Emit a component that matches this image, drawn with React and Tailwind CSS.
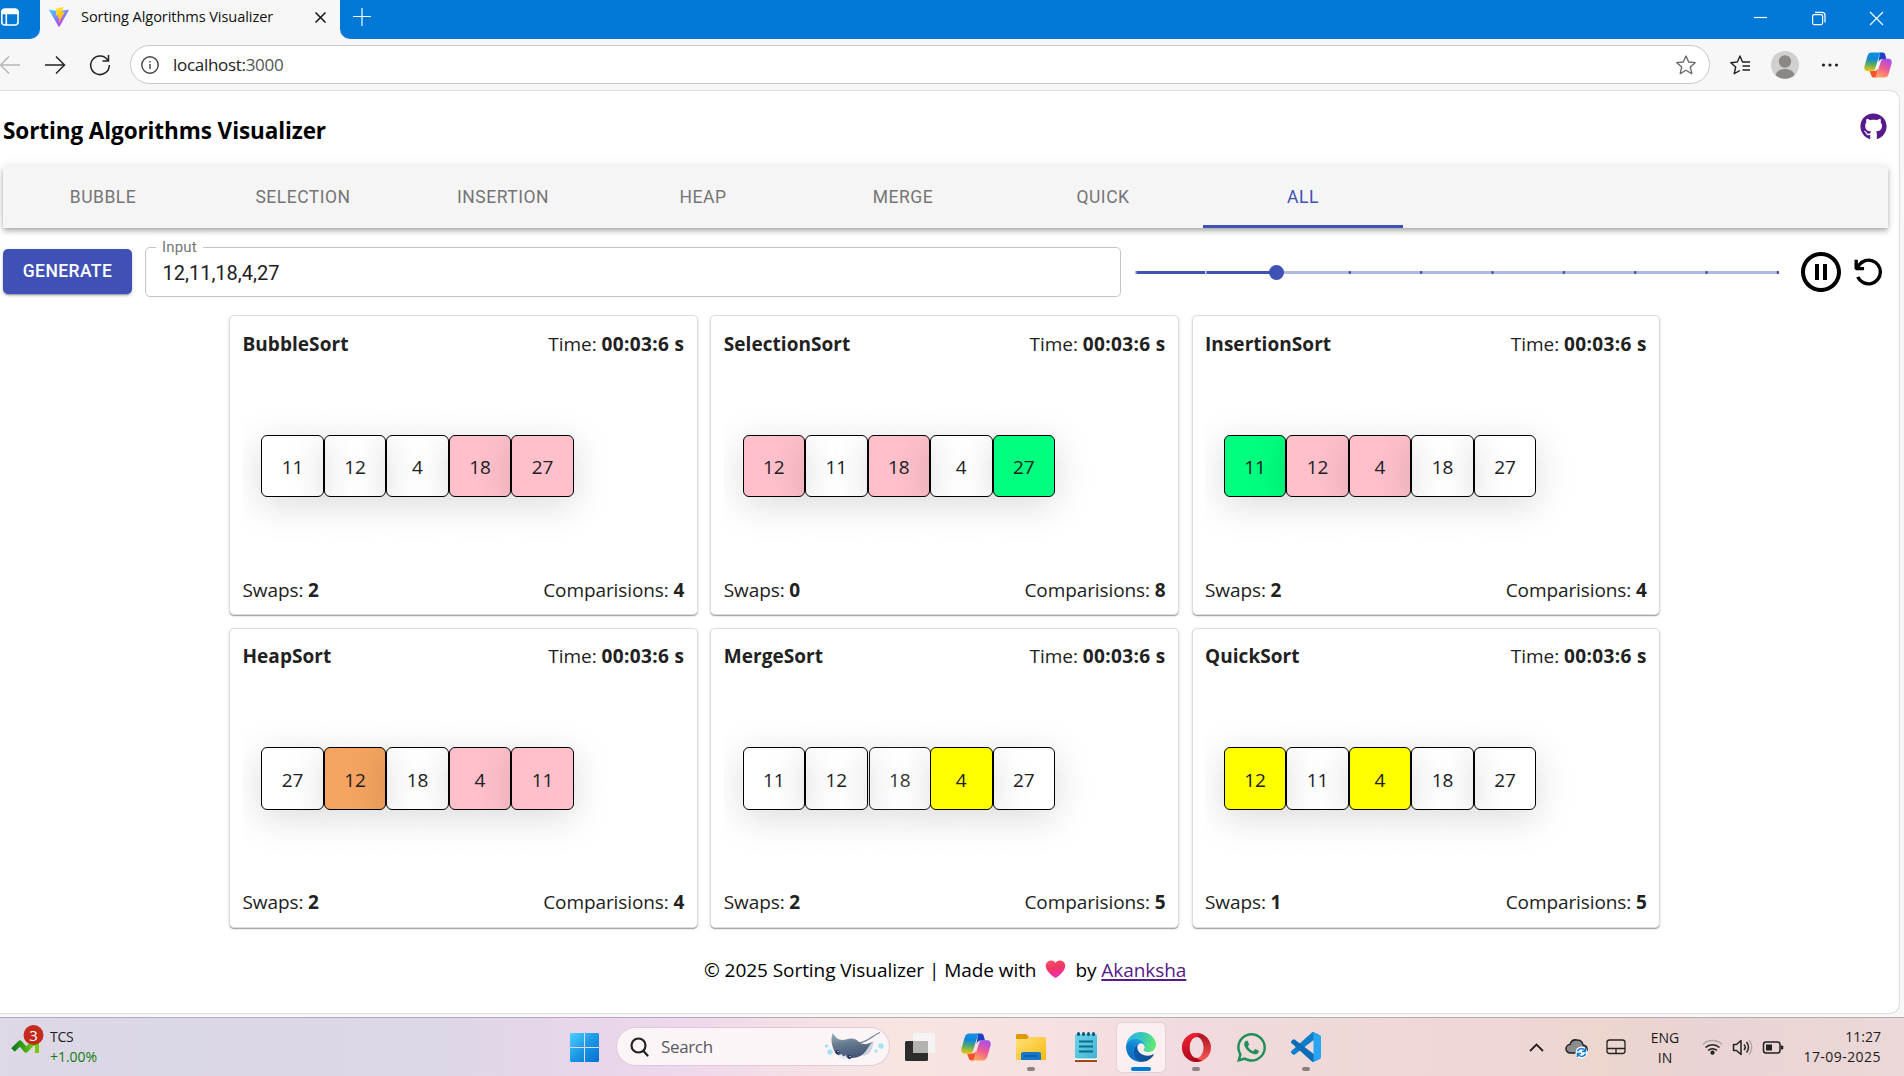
import { VscDebugRestart } from "react-icons/vsc";
import { MdPauseCircleOutline } from "react-icons/md";
import { FaGithub, FaWhatsapp } from "react-icons/fa";

const SEGOE = "font-['Open_Sans',sans-serif]";

const COLORS = {
  w: "",
  p: "bg-[#ffc0cb]",
  g: "bg-[#00ff7f]",
  o: "bg-[#f4a460]",
  y: "bg-[#ffff00] relative z-10",
  m: "translate-x-px opacity-90",
};

const SORTS = [
  { name: "BubbleSort", swaps: 2, comps: 4, items: [[11, "w"], [12, "w"], [4, "w"], [18, "p"], [27, "p"]] },
  { name: "SelectionSort", swaps: 0, comps: 8, items: [[12, "p"], [11, "w"], [18, "p"], [4, "w"], [27, "g"]] },
  { name: "InsertionSort", swaps: 2, comps: 4, items: [[11, "g"], [12, "p"], [4, "p"], [18, "w"], [27, "w"]] },
  { name: "HeapSort", swaps: 2, comps: 4, items: [[27, "w"], [12, "o"], [18, "w"], [4, "p"], [11, "p"]] },
  { name: "MergeSort", swaps: 2, comps: 5, items: [[11, "w"], [12, "w"], [18, "m"], [4, "y"], [27, "w"]] },
  { name: "QuickSort", swaps: 1, comps: 5, items: [[12, "y"], [11, "w"], [4, "y"], [18, "w"], [27, "w"]] },
];

const TABS = ["BUBBLE", "SELECTION", "INSERTION", "HEAP", "MERGE", "QUICK", "ALL"];

function ViteLogo() {
  return (
    <svg width="20" height="20" viewBox="0 0 32 32">
      <defs>
        <linearGradient id="va" x1="0" y1="0" x2="0.6" y2="1">
          <stop offset="0" stopColor="#41d1ff" />
          <stop offset="1" stopColor="#bd34fe" />
        </linearGradient>
        <linearGradient id="vb" x1="0.4" y1="0" x2="0.6" y2="1">
          <stop offset="0" stopColor="#ffea83" />
          <stop offset="0.1" stopColor="#ffdd35" />
          <stop offset="1" stopColor="#ffa800" />
        </linearGradient>
      </defs>
      <path fill="url(#va)" d="M31.4 5.5 16.9 31.1a.9.9 0 0 1-1.6 0L.5 5.5a.9.9 0 0 1 1-1.3L16 6.8l14.4-2.6a.9.9 0 0 1 1 1.3Z" />
      <path fill="url(#vb)" d="M22.6 0 11.9 2.1a.5.5 0 0 0-.4.4l-.6 11.1c0 .3.2.5.5.4l3-.7c.3 0 .5.2.5.5l-.9 4.3c0 .3.2.6.5.5l1.8-.5c.3-.1.6.1.5.4l-1.4 6.8c-.1.5.5.7.7.3l8.8-17.5c.1-.3-.1-.6-.4-.6l-3.1.6c-.3.1-.5-.2-.5-.5l2-7c.2-.3 0-.6-.3-.6Z" />
    </svg>
  );
}

function Copilot({ size }) {
  return (
    <svg width={size} height={size} viewBox="0 0 30 30">
      <defs>
        <linearGradient id="ca" x1="0.3" y1="0" x2="0.2" y2="1">
          <stop offset="0" stopColor="#1490df" />
          <stop offset="0.3" stopColor="#0f86dc" />
          <stop offset="0.6" stopColor="#52a86b" />
          <stop offset="1" stopColor="#f2cb0b" />
        </linearGradient>
        <linearGradient id="cb" x1="0.7" y1="0" x2="0.3" y2="1">
          <stop offset="0" stopColor="#a64ef0" />
          <stop offset="0.5" stopColor="#ee5a8f" />
          <stop offset="1" stopColor="#ffa85c" />
        </linearGradient>
      </defs>
      <path fill="#1b41c4" d="M17 1.5h3c1.5 0 2.3.9 2.7 2.3L24 8.5h-3.5c-3 0-4 1-5 4Z" />
      <path fill="#f4532f" d="M13 28.5h-2.5c-1.5 0-2.3-1-2.7-2.3L6 21.5h4.5c3 0 4-1 5-4Z" />
      <path fill="url(#ca)" d="M8 1.5h11c-1.6.5-2.3 2-2.900 4l-4 13c-.6 2-1.8 3.2-4 3.2H3.5C.8 21.7-.3 19 .6 16L3.8 5C4.500 2.8 5.800 1.500 8 1.500Z" />
      <path fill="url(#cb)" d="M22 28.5H11c1.600-.5 2.300-2 2.900-4l4-13c.6-2 1.800-3.200 4-3.200h4.600c2.700 0 3.800 2.700 2.900 5.700L26.200 25c-.7 2.200-2 3.500-4.200 3.500Z" />
    </svg>
  );
}

function Browser() {
  return (
    <header className={`${SEGOE} h-[90px] bg-[#f7f7f7]`}>
      <div className="flex h-[39px] bg-[#f7f7f7]">
        <div className="flex w-10 items-start rounded-br-[10px] bg-[#0078d7] pt-2">
          <svg width="20" height="19" viewBox="0 0 20 19" fill="none" stroke="#fff" strokeWidth="1.600">
            <rect x="1.800" y="1.300" width="16.200" height="15.700" rx="3" />
            <path d="M2 5.500V4a3 3 0 0 1 3-2.700h10A3 3 0 0 1 18 4v1.500Z" fill="#fff" />
            <path d="M6.300 5v12" />
          </svg>
        </div>
        <div className="flex w-[300px] items-center pb-[5px] pl-[9px] bg-[#f7f7f7]">
          <ViteLogo />
          <span className="ml-3 whitespace-nowrap text-[14.6px] tracking-[-0.09px] text-[#111]">Sorting Algorithms Visualizer</span>
          <svg className="ml-auto mr-[14px] mt-px" width="11" height="11" viewBox="0 0 11 11" stroke="#111" strokeWidth="1.500">
            <path d="M.5.5l10 10M10.500.5l-10 10" />
          </svg>
        </div>
        <div className="flex flex-1 items-start rounded-bl-[10px] bg-[#0078d7]">
          <svg className="ml-[13px] mt-[8px]" width="18" height="18" viewBox="0 0 18 18" stroke="#fff" strokeWidth="1.200">
            <path d="M9 0v18M0 8.500h18" />
          </svg>
          <svg className="ml-auto mr-[19px] mt-[11px]" width="131" height="15" viewBox="0 0 131 15" fill="none" stroke="#fff" strokeWidth="1.200">
            <path d="M0 6.500h13" />
            <rect x="58.600" y="3.600" width="10" height="10" rx="1.500" />
            <path d="M61 1.400h7a3 3 0 0 1 3 3v7" />
            <path d="M116 1l13 13M129 1l-13 13" />
          </svg>
        </div>
      </div>
      <div className="flex h-[51px] items-center">
        <svg className="shrink-0" width="112" height="24" viewBox="0 0 112 24" fill="none" strokeWidth="1.500">
          <path stroke="#b5b5b5" d="M20 12H0.500M9 3.500 0.500 12 9 20.500" />
          <path stroke="#222" d="M45 12h19.500M56 3.500 64.500 12 56 20.500" />
          <path stroke="#222" d="M107.800 7.200A9.300 9.300 0 1 0 109.300 12M108.500 2v6h-6" />
        </svg>
        <div className="ml-[18px] flex h-[39px] w-[1580px] items-center rounded-full border border-[#c8c8c8] bg-white pl-[10px] pr-[13px]">
          <svg width="18" height="18" viewBox="0 0 18 18" fill="none" stroke="#444" strokeWidth="1.400">
            <circle cx="9" cy="9" r="8.200" />
            <path d="M9 8v5M9 5v1.500" />
          </svg>
          <span className="ml-[14px] text-[17px] tracking-[-0.3px] text-[#222]">localhost:<span className="text-[#555]">3000</span></span>
          <svg className="ml-auto" width="20" height="20" viewBox="0 0 20 20" fill="none" stroke="#666" strokeWidth="1.300" strokeLinejoin="round">
            <path d="M10 1l2.700 6 6.500.700-4.900 4.300 1.500 6.700L10 15.300 4.200 18.700 5.700 12 .8 7.700l6.500-.7Z" />
          </svg>
        </div>
        <svg className="ml-[20px] shrink-0" width="20" height="20" viewBox="0 0 20 20" fill="none" stroke="#222" strokeWidth="1.400" strokeLinejoin="round">
          <path d="M13.500 7h-1L10 1 7.300 7 .8 7.700l4.900 4.300-1.500 6.700L10 15.500M12.500 11H20M12.500 15H20M13.500 7H20" />
        </svg>
        <svg className="ml-[21px] shrink-0" width="28" height="28" viewBox="0 0 28 28">
          <circle cx="14" cy="14" r="14" fill="#d2d0ce" />
          <circle cx="14" cy="10.500" r="6.200" fill="#8a8886" />
          <path fill="#8a8886" d="M4.500 24c1-4 5-6 9.500-6s8.500 2 9.500 6a14 14 0 0 1-19 0Z" />
        </svg>
        <svg className="ml-[22px] shrink-0" width="18" height="4" viewBox="0 0 18 4" fill="#222">
          <circle cx="2.500" cy="2" r="1.600" /><circle cx="9" cy="2" r="1.600" /><circle cx="15.500" cy="2" r="1.600" />
        </svg>
        <div className="ml-[25px]"><Copilot size={28} /></div>
      </div>
    </header>
  );
}

function Slider() {
  return (
    <svg className="ml-[14px] shrink-0" width="646" height="20" viewBox="0 0 646 20">
      <rect x="1" y="9" width="643" height="3" fill="#b3bae1" />
      <rect x="1" y="9" width="142" height="3" fill="#3f51b5" />
      <rect x="0" y="9" width="1.500" height="3" fill="#b3bae1" />
      <rect x="70" y="9" width="1.500" height="3" fill="#d5d9ee" />
      {[3, 4, 5, 6, 7, 8, 9].map((i) => (
        <rect key={i} x={i * 71.350 - 0.500} y="9" width="2.500" height="3" rx="1" fill="#3f51b5" />
      ))}
      <circle cx="141.500" cy="10.500" r="7.500" fill="#3f51b5" />
    </svg>
  );
}

function Card({ s }) {
  return (
    <section className={`${SEGOE} flex h-[300px] w-[468.750px] flex-col justify-between rounded-[5px] border border-[#dcdcdc] bg-white px-[12.500px] text-[19px] text-[#212121] shadow-[0_2px_1px_-1px_rgba(0,0,0,0.2),0_1px_1px_0_rgba(0,0,0,0.14),0_1px_3px_0_rgba(0,0,0,0.12)]`}>
      <div className="flex h-[56px] items-center justify-between">
        <b className="tracking-[0.05px]">{s.name}</b>
        <span className="tracking-[-0.05px]">Time: <b className="tracking-[0.36px]">00:03:6 s</b></span>
      </div>
      <div className="flex h-[186px] items-center overflow-hidden pb-[4px] pl-[18.75px]">
        {s.items.map(([n, c], i) => (
          <div key={i} className={`flex size-[62.500px] items-center justify-center rounded-[6px] border border-black shadow-[0_8px_38px_rgba(0,0,0,0.15)] ${COLORS[c]}`}><span className="mt-[3px]">{n}</span></div>
        ))}
      </div>
      <div className="flex h-[50px] items-center justify-between pt-[2px]">
        <span className="tracking-[-0.1px]">Swaps: <b>{s.swaps}</b></span>
        <span className="tracking-[-0.1px]">Comparisions: <b>{s.comps}</b></span>
      </div>
    </section>
  );
}

function Page() {
  return (
    <main className="mr-1 h-[924px] rounded-r-[10px] border-b border-r border-t border-[#dedede] bg-white pl-[3px]">
      <div className="flex h-[75px] items-start justify-between pr-[12px]">
        <h1 className={`${SEGOE} mt-[23px] text-[22.5px] font-bold leading-[34px] tracking-[-0.09px] text-black`}>Sorting Algorithms Visualizer</h1>
        <FaGithub className="mt-[22px]" size={27} color="#551a8b" />
      </div>
      <nav className="mr-[11px] flex h-[62px] bg-[#f5f5f5] font-['Roboto'] text-[17.500px] tracking-[0.500px] text-[#757575] shadow-[0_2px_4px_-1px_rgba(0,0,0,0.2),0_4px_5px_0_rgba(0,0,0,0.14),0_1px_10px_0_rgba(0,0,0,0.12)]">
        {TABS.map((t) => (
          <div key={t} className={`flex w-[200px] items-center justify-center border-b-[3px] pt-[3px] ${t === "ALL" ? "border-[#3f51b5] text-[#3f51b5]" : "border-transparent"}`}>{t}</div>
        ))}
      </nav>
      <div className="mt-[19px] flex h-[50px] items-center font-['Roboto']">
        <button className="mb-px h-[45px] w-[129px] rounded-[5px] bg-[#3f51b5] pb-px text-[17.5px] font-medium tracking-[0.4px] text-white shadow-[0_3px_1px_-2px_rgba(0,0,0,0.2),0_2px_2px_0_rgba(0,0,0,0.14),0_1px_5px_0_rgba(0,0,0,0.12)]">GENERATE</button>
        <div className="relative ml-[13px] flex h-[50px] w-[976px] items-center rounded-[5px] border border-[#c4c4c4] pl-[16.5px] pt-[2px] text-[20px] text-[#212121]">
          12,11,18,4,27
          <span className="absolute left-[10px] top-[-11px] bg-white px-[6px] text-[15px] leading-[20px] tracking-[0.150px] text-[#757575]">Input</span>
        </div>
        <Slider />
        <MdPauseCircleOutline className="ml-[16px] shrink-0" size={48} color="#000" />
        <VscDebugRestart className="ml-[5px] shrink-0" size={36} color="#000" />
      </div>
      <div className="mt-[18px] ml-[226px] grid w-max grid-cols-3 gap-x-[12.5px] gap-y-[12.5px]">
        {SORTS.map((s) => <Card key={s.name} s={s} />)}
      </div>
      <footer className={`${SEGOE} mt-[25px] ml-[701px] flex items-center whitespace-pre text-[19px] leading-[34px] tracking-[-0.06px] text-black`}>
        <span>© 2025 Sorting Visualizer | Made with</span>
        <svg className="mx-[9px]" width="21" height="19" viewBox="0 0 21 19">
          <defs>
            <linearGradient id="ht" x1="0" y1="0" x2="0.300" y2="1"><stop offset="0" stopColor="#f8506a" /><stop offset="0.500" stopColor="#f0385f" /><stop offset="1" stopColor="#f030b0" /></linearGradient>
          </defs>
          <path fill="url(#ht)" d="M10.500 3C12.500 0 16 .200 18 1.500c2.500 1.700 2.700 5 1.500 7.500-1.500 3.500-5 6.500-8 8.400-.7.400-1.300.400-2 0C6.500 15.500 3 12.500 1.500 9 .3 6.500.5 3.200 3 1.500 5 .200 8.500 0 10.500 3Z" />
        </svg>
        <span>by </span>
        <a className="text-[#551a8b] underline decoration-2 underline-offset-2">Akanksha</a>
      </footer>
    </main>
  );
}

function Manta() {
  return (
    <svg width="60" height="32" viewBox="0 0 60 32">
      <defs>
        <linearGradient id="mt" x1="0" y1="0" x2="0.300" y2="1"><stop offset="0" stopColor="#9bb3bd" /><stop offset="0.500" stopColor="#64798c" /><stop offset="1" stopColor="#46587a" /></linearGradient>
      </defs>
      <path d="M35 12C44 11 49 4 56 1.500" fill="none" stroke="#70818f" strokeWidth="1.300" />
      <path fill="#cfd6df" d="M38 25c7-1 11-5 11.500-15-3 3-5 4-7 7Z" />
      <path fill="url(#mt)" d="M9 2c3 6 7 8 13 6.500 6-2 10-1 14 3.500 4 2 8 1 13-1-5 4-5 7-8 10-3 4-7 5.500-13 6-3 0-6-.5-8-1.500-4-.5-8-1.500-9.500-5C8 15 6 8 9 2Z" />
      <path fill="#e7ebf4" d="M15 24l3-1 1 3 3-2 1 4-3 1-2-1-3-1Z" />
      <circle cx="13.500" cy="21" r="2" fill="#1d2b55" /><circle cx="25.500" cy="26" r="2" fill="#1d2b55" />
      <circle cx="14" cy="20.500" r=".7" fill="#fff" /><circle cx="26" cy="25.500" r=".7" fill="#fff" />
      <g fill="#a5e2f2"><circle cx="2.500" cy="15" r="1.800" /><circle cx="6" cy="21" r="2.700" /><circle cx="57" cy="15" r="2.700" /><circle cx="52" cy="20" r="1.700" /></g>
    </svg>
  );
}

function TaskIcon({ children, mark, active }) {
  return (
    <div className={`flex h-[49px] w-[48px] flex-col items-center rounded-[5px] ${active ? "bg-[#fbeff1] shadow-[0_0_1px_1px_rgba(0,0,0,0.06)]" : ""}`}>
      <div className="mt-[9px] flex h-[30px] items-center justify-center">{children}</div>
      {mark && <div className={`mt-[5px] h-[4px] rounded-full ${active ? "w-[20px] bg-[#0078d7]" : "w-[8px] bg-[#8b8180]"}`} />}
    </div>
  );
}

function Taskbar() {
  return (
    <footer className={`${SEGOE} flex h-[59px] border-t border-[#b5abb5] bg-[linear-gradient(90deg,#dfd8e6_0,#dad7e7_160px,#ded7e7_450px,#e8d6ea_590px,#efd7ec_680px,#f5dfe6_790px,#f8e5e1_900px,#f6e0e2_1060px,#f0dade_1200px,#efd9d7_1340px,#f0d6d7_1500px,#ecd6ce_1600px,#ead3d4_1700px,#ecd8d8_1904px)] text-[#1b1b1b]`}>
      <svg className="ml-[11px] mt-[6px] shrink-0" width="34" height="34" viewBox="0 0 34 34">
        <defs><linearGradient id="ar" x1="0" x2="1"><stop offset="0" stopColor="#0b7a1c" /><stop offset="0.500" stopColor="#3fa30e" /><stop offset="1" stopColor="#7bd611" /></linearGradient></defs>
        <path fill="none" stroke="url(#ar)" strokeWidth="5" strokeLinejoin="round" d="M2 26l7-7 6 7 9-9" />
        <path fill="#6fcf10" d="M14 16h14v13h-4V22Z" />
        <circle cx="22.500" cy="11" r="10" fill="#c42b1c" />
        <text x="22.500" y="16.500" textAnchor="middle" fontSize="15" fill="#fff">3</text>
      </svg>
      <div className="ml-[5px] mt-[9px] w-[120px] text-[14px] leading-[20px]">
        <div className="tracking-[-0.3px]">TCS</div>
        <div className="tracking-[-0.05px] text-[#107c10]">+1.00%</div>
      </div>
      <div className="ml-[400px] flex">
        <svg className="mt-[15px]" width="29" height="29" viewBox="0 0 29 29">
          <defs><linearGradient id="wn" x1="0" y1="0" x2="1" y2="1"><stop offset="0" stopColor="#4cd0ff" /><stop offset="0.500" stopColor="#1b98e4" /><stop offset="1" stopColor="#0070d0" /></linearGradient></defs>
          <path fill="url(#wn)" d="M1 0h13v14H0V1Zm14 0h13l1 1v13H15ZM0 15h14v14H1l-1-1Zm15 0h14v13l-1 1H15Z" />
        </svg>
        <div className="ml-[17px] mt-[9px] flex h-[39px] w-[274px] items-center rounded-full border border-[#dccbd6] bg-[#fcf5f8] pl-[13px] pr-[5px]">
          <svg width="19" height="20" viewBox="0 0 19 20" fill="none" stroke="#222" strokeWidth="2.200" strokeLinecap="round"><circle cx="8.500" cy="8.500" r="7" /><path d="M13.500 14l4 4.500" /></svg>
          <span className="ml-[12px] mt-px text-[17px] tracking-[-0.35px] text-[#5b5860]">Search</span>
          <div className="ml-auto"><Manta /></div>
        </div>
        <svg className="ml-[15px] mt-[15px]" width="31" height="30" viewBox="0 0 31 30">
          <rect x="0" y="8" width="23" height="20" rx="1.500" fill="#2c2c2a" />
          <rect x="8" y="0" width="22" height="20" rx="1.500" fill="#f4f4f4" />
          <path d="M8 8h15v12H8Z" fill="#b3b2b0" />
        </svg>
      </div>
      <div className="ml-[16px] mt-[5px] flex gap-[7px]">
        <TaskIcon><Copilot size={30} /></TaskIcon>
        <TaskIcon mark>
          <svg width="30" height="28" viewBox="0 0 30 28">
            <defs><linearGradient id="fd" x1="0" y1="0" x2="1" y2="1"><stop offset="0" stopColor="#ffe07a" /><stop offset="1" stopColor="#fbb90f" /></linearGradient></defs>
            <path fill="#dc9b0a" d="M1 1h9l3 3h16v6H0V2Z" />
            <path fill="url(#fd)" d="M0 6h11l2-2h16l1 1v22H0Z" />
            <path fill="#1479c9" d="M5 27v-6a2 2 0 0 1 2-2h16a2 2 0 0 1 2 2v6Z" /><path stroke="#0b4a85" d="M8.500 23h13" />
          </svg>
        </TaskIcon>
        <TaskIcon>
          <svg width="22" height="31" viewBox="0 0 22 31">
            <defs><linearGradient id="np" x1="0" y1="0" x2="1" y2="1"><stop offset="0" stopColor="#6fd5ea" /><stop offset="1" stopColor="#41b4d3" /></linearGradient></defs>
            <path fill="#9c4a17" d="M0 26h22v4H0Z" /><path fill="#fff" d="M0 25h22v3H0Z" />
            <rect y="2" width="22" height="24.500" rx="1.500" fill="url(#np)" />
            <g fill="#0b5a78"><rect x="2" width="3" height="4" rx="1.500" /><rect x="7" width="3" height="4" rx="1.500" /><rect x="12" width="3" height="4" rx="1.500" /><rect x="17" width="3" height="4" rx="1.500" /></g>
            <path stroke="#0b6a8c" strokeWidth="1.800" d="M4 9.500h14M4 14.500h14M4 19.500h14" />
          </svg>
        </TaskIcon>
        <TaskIcon mark active>
          <svg width="30" height="30" viewBox="0 0 256 256">
            <defs>
              <linearGradient id="e1" x1="0.200" x2="1"><stop offset="0" stopColor="#0c59a4" /><stop offset="1" stopColor="#114a8b" /></linearGradient>
              <linearGradient id="e2" x1="0.600" y1="0.100" x2="0.300" y2="1"><stop offset="0" stopColor="#1b9de2" /><stop offset="0.400" stopColor="#127fce" /><stop offset="1" stopColor="#0c69c4" /></linearGradient>
              <linearGradient id="e3" x1="0" y1="0.400" x2="1" y2="0.600"><stop offset="0" stopColor="#35b0ec" /><stop offset="0.500" stopColor="#36c8b8" /><stop offset="1" stopColor="#66eb6e" /></linearGradient>
            </defs>
            <path fill="url(#e1)" d="M231 190.500c-3.400 1.800-6.900 3.400-10.500 4.700a101.900 101.900 0 0 1-35.900 6.500c-47.300 0-88.500-32.500-88.500-74.300a31.500 31.500 0 0 1 16.400-27.300c-42.800 1.800-53.800 46.400-53.800 72.500 0 74 68.100 81.400 82.800 81.400 7.900 0 19.800-2.300 27-4.600l1.300-.4a128.300 128.300 0 0 0 66.600-52.800 4 4 0 0 0-5.400-5.700Z" />
            <path fill="url(#e2)" d="M105.700 241.400a79.200 79.200 0 0 1-22.700-21.300 80.700 80.700 0 0 1 29.500-120c3.200-1.500 8.500-4.100 15.600-4a32.400 32.400 0 0 1 25.700 13 31.900 31.900 0 0 1 6.300 18.700c0-.2 24.500-79.600-80-79.600-43.900 0-80 41.700-80 78.200a130.200 130.200 0 0 0 12.100 56 128 128 0 0 0 156.400 67 75.500 75.500 0 0 1-62.800-8Z" />
            <path fill="url(#e3)" d="M152.300 148.900c-.9 1-3.400 2.500-3.400 5.600 0 2.600 1.700 5.200 4.800 7.300 14.300 10 41.400 8.600 41.500 8.600a59.600 59.600 0 0 0 30.300-8.300 61.400 61.400 0 0 0 30.400-52.900c.3-22.400-8-37.300-11.300-43.900C223.500 23.900 177.700 0 128 0A128 128 0 0 0 0 126.200c.5-36.500 36.800-66 80-66 3.500 0 23.500.300 42 10 16.300 8.600 24.900 19 30.800 29.200 6.200 10.700 7.300 24.100 7.300 29.500 0 5.300-2.700 13.300-7.800 19.900Z" />
          </svg>
        </TaskIcon>
        <TaskIcon mark>
          <svg width="29" height="29" viewBox="0 0 29 29">
            <defs><linearGradient id="op" x1="0" y1="0" x2="0.300" y2="1"><stop offset="0" stopColor="#ff2238" /><stop offset="1" stopColor="#a80a1a" /></linearGradient><linearGradient id="oq" x1="0" y1="0" x2="0" y2="1"><stop offset="0" stopColor="#a50f1d" /><stop offset="1" stopColor="#ff5a58" /></linearGradient></defs>
            <path fill="url(#oq)" fillRule="evenodd" d="M14.500 0a14.500 14.500 0 1 1 0 29 14.500 14.500 0 0 1 0-29Zm0 4C10.500 4 7.500 9 7.500 14.500S10.500 25 14.500 25s7-5 7-10.500S18.500 4 14.500 4Z" />
            <path fill="url(#op)" d="M14.500 0a14.500 14.500 0 0 0 0 29c2.500 0 4.500-.7 6.500-2-2 .5-4 0-5.500-1.500-1-.5-1-.5-1-.5-4 0-7-5-7-10.500S10.500 4 14.500 4c1.500-1.500 4-2.500 6.500-2A14 14 0 0 0 14.500 0Z" />
          </svg>
        </TaskIcon>
        <TaskIcon><FaWhatsapp size={33} color="#1d8f57" /></TaskIcon>
        <TaskIcon mark>
          <svg width="30" height="30" viewBox="0 0 100 100">
            <path fill="#0f7fc9" d="M96.500 10.800 75.900.900a6.200 6.200 0 0 0-7.100 1.200L1.300 63.600a4.200 4.200 0 0 0 0 6.200l5.500 5a4.200 4.200 0 0 0 5.400.200L93.400 13.400a4.100 4.100 0 0 1 6.600 3.300v-.2a6.300 6.300 0 0 0-3.500-5.700Z" />
            <path fill="#0a6db5" d="m96.500 89.200-20.600 9.900a6.200 6.200 0 0 1-7.100-1.200L1.300 36.400a4.200 4.200 0 0 1 0-6.200l5.500-5a4.200 4.200 0 0 1 5.400-.2l81.200 61.600a4.100 4.100 0 0 0 6.600-3.300v.2a6.300 6.300 0 0 1-3.500 5.700Z" />
            <path fill="#29a4f0" d="M75.900 99.100a6.200 6.200 0 0 1-7.100-1.200c2.300 2.300 6.200.7 6.200-2.600V4.700c0-3.300-3.900-4.900-6.200-2.600A6.200 6.200 0 0 1 75.900.900l20.600 9.900a6.300 6.300 0 0 1 3.500 5.600v67.200a6.300 6.300 0 0 1-3.500 5.600Z" />
          </svg>
        </TaskIcon>
      </div>
      <svg className="ml-auto mt-[16px] shrink-0" width="98" height="26" viewBox="0 0 98 26" fill="none">
        <path stroke="#222" strokeWidth="1.800" d="M1 17l6.500-6.500L14 17" />
        <path fill="#8d8d8d" stroke="#222" strokeWidth="1.500" d="M43 19h-1.500a4 4 0 0 1-.5-8.500C42 7 45 5.500 48 6c3 0 5.500 2 6 5 3 .5 4.500 2.500 4 5.500L52 14l-6 5Z" />
        <circle cx="52.500" cy="18.500" r="6" fill="#fff" />
        <path stroke="#0f78d4" strokeWidth="1.500" d="M48.500 17.500a4 4 0 0 1 7.500-.5M56.500 14v3.500H53M56.500 19.500a4 4 0 0 1-7.500.5M48.500 23v-3.500H52" />
        <path stroke="#222" strokeWidth="1.300" d="M80.500 6h13a2.500 2.500 0 0 1 2.500 2.500v8.500a2.500 2.500 0 0 1-2.500 2.500h-13a2.500 2.500 0 0 1-2.500-2.500V8.500A2.500 2.500 0 0 1 80.500 6ZM78 14.500h18M87 14.500v5" />
      </svg>
      <div className="ml-[20px] mt-[10px] w-[36px] text-center text-[14px] leading-[20px]">ENG<br />IN</div>
      <svg className="ml-[19px] mt-[18px] shrink-0" width="84" height="22" viewBox="0 0 84 22" fill="none" stroke="#222" strokeWidth="1.500">
        <path stroke="#b6a4a4" d="M1 8.500a13.500 13.500 0 0 1 19 0" />
        <path d="M3.500 11.500a10 10 0 0 1 14 0M6 14.500a6.500 6.500 0 0 1 9 0" />
        <circle cx="10.500" cy="16.700" r="1.400" fill="#222" />
        <path d="M31.500 8.500h3l4.500-4v14l-4.500-4h-3ZM42 8.500a4 4 0 0 1 0 5.500M44.500 6a8 8 0 0 1 0 10.500" strokeLinejoin="round" />
        <path stroke="#b6a4a4" d="M47 4a11 11 0 0 1 0 14.500" />
        <rect x="61.500" y="6" width="16.500" height="11" rx="2.500" />
        <path fill="#222" stroke="none" d="M64 8.500h6v6h-6ZM79 9.500h1.500l.8.800v2.500l-.8.800H79Z" />
      </svg>
      <div className="ml-[15px] mr-[23px] mt-[9px] w-[80px] whitespace-nowrap text-right text-[14px] leading-[20px]">
        <div>11:27</div>
        <div className="tracking-[0.45px]">17-09-2025</div>
      </div>
    </footer>
  );
}

export default function App() {
  return (
    <div className="h-[1076px] w-[1904px] overflow-hidden bg-[#f7f7f7]">
      <Browser />
      <Page />
      <div className="h-[3px]" />
      <Taskbar />
    </div>
  );
}
